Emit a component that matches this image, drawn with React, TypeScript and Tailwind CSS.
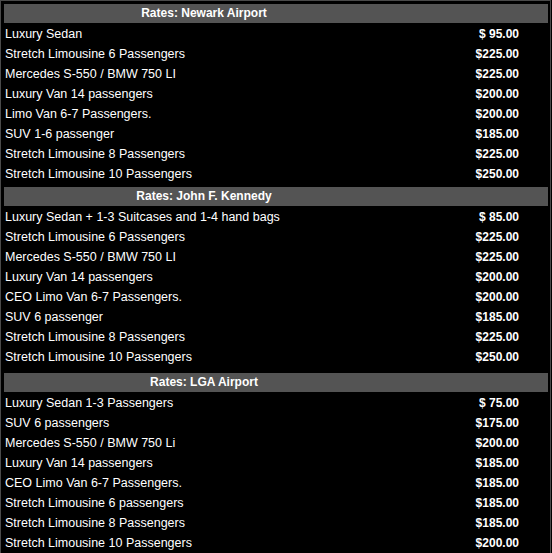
type Rate = { name: string; price: string };

const sections: { title: string; gap: string; rates: Rate[] }[] = [
  {
    title: "Rates: Newark Airport",
    gap: "",
    rates: [
      { name: "Luxury Sedan", price: "$ 95.00" },
      { name: "Stretch Limousine 6 Passengers", price: "$225.00" },
      { name: "Mercedes S-550 / BMW 750 LI", price: "$225.00" },
      { name: "Luxury Van 14 passengers", price: "$200.00" },
      { name: "Limo Van 6-7 Passengers.", price: "$200.00" },
      { name: "SUV 1-6 passenger", price: "$185.00" },
      { name: "Stretch Limousine 8 Passengers", price: "$225.00" },
      { name: "Stretch Limousine 10 Passengers", price: "$250.00" },
    ],
  },
  {
    title: "Rates: John F. Kennedy",
    gap: "mt-[4px]",
    rates: [
      { name: "Luxury Sedan + 1-3 Suitcases and 1-4 hand bags", price: "$ 85.00" },
      { name: "Stretch Limousine 6 Passengers", price: "$225.00" },
      { name: "Mercedes S-550 / BMW 750 LI", price: "$225.00" },
      { name: "Luxury Van 14 passengers", price: "$200.00" },
      { name: "CEO Limo Van 6-7 Passengers.", price: "$200.00" },
      { name: "SUV 6 passenger", price: "$185.00" },
      { name: "Stretch Limousine 8 Passengers", price: "$225.00" },
      { name: "Stretch Limousine 10 Passengers", price: "$250.00" },
    ],
  },
  {
    title: "Rates: LGA Airport",
    gap: "mt-[7px]",
    rates: [
      { name: "Luxury Sedan 1-3 Passengers", price: "$ 75.00" },
      { name: "SUV 6 passengers", price: "$175.00" },
      { name: "Mercedes S-550 / BMW 750 Li", price: "$200.00" },
      { name: "Luxury Van 14 passengers", price: "$185.00" },
      { name: "CEO Limo Van 6-7 Passengers.", price: "$185.00" },
      { name: "Stretch Limousine 6 passengers", price: "$185.00" },
      { name: "Stretch Limousine 8 Passengers", price: "$185.00" },
      { name: "Stretch Limousine 10 Passengers", price: "$200.00" },
    ],
  },
];

export default function App() {
  return (
    <div className="min-h-screen bg-black font-['Liberation_Sans',Arial,sans-serif] text-[12px] text-white">
      <div className="w-[551px] border border-[#4a4a4a] pt-[3px] pl-[3px] pr-[2px] pb-[3px]">
        {sections.map((s) => (
          <div key={s.title} className={s.gap}>
            <div className="flex h-[19px] bg-[#545454] leading-[19px] font-bold">
              <span className="w-[400px] text-center">{s.title}</span>
            </div>
            <div>
              {s.rates.map((r, i) => (
                <div key={i} className="flex h-[20px] items-start leading-[22px]">
                  <span className="flex-1 pl-[1px] text-[12.5px]">{r.name}</span>
                  <span className="pr-[29px] text-right font-bold">{r.price}</span>
                </div>
              ))}
            </div>
          </div>
        ))}
      </div>
    </div>
  );
}
